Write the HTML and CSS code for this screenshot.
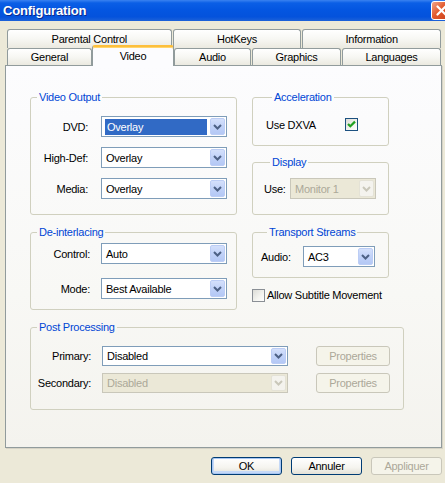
FILE: index.html
```html
<!DOCTYPE html>
<html>
<head>
<meta charset="utf-8">
<title>Configuration</title>
<link rel="stylesheet" href="styles.css">
</head>
<body>
<div class="window">
  <div class="titlebar">
    <span class="title">Configuration</span>
    <span class="close"><svg width="13" height="13" viewBox="0 0 13 13"><path d="M2.5 2.5 L10.5 10.5 M10.5 2.5 L2.5 10.5" stroke="#fff" stroke-width="2.2" stroke-linecap="round"/></svg></span>
  </div>
  <div class="content">
    <div class="tabs">
      <div class="tabrow back">
        <div class="tab t-parental">Parental Control</div>
        <div class="tab t-hotkeys">HotKeys</div>
        <div class="tab t-info">Information</div>
      </div>
      <div class="tabrow front">
        <div class="tab t-general">General</div>
        <div class="tab selected t-video">Video</div>
        <div class="tab t-audio">Audio</div>
        <div class="tab t-graphics">Graphics</div>
        <div class="tab t-lang">Languages</div>
      </div>
    </div>
    <div class="panel">
      <div class="columns">
        <div class="col col-left">
          <fieldset class="group g-vo">
            <legend>Video Output</legend>
            <div class="row">
              <span class="lbl lbl-vo">DVD:</span>
              <div class="combo c-vo"><span class="val sel">Overlay</span><span class="btn"><svg width="9" height="6" viewBox="0 0 9 6"><path d="M1 1 L4.5 4.5 L8 1" fill="none" stroke="#4d6185" stroke-width="2"/></svg></span></div>
            </div>
            <div class="row">
              <span class="lbl lbl-vo">High-Def:</span>
              <div class="combo c-vo"><span class="val">Overlay</span><span class="btn"><svg width="9" height="6" viewBox="0 0 9 6"><path d="M1 1 L4.5 4.5 L8 1" fill="none" stroke="#4d6185" stroke-width="2"/></svg></span></div>
            </div>
            <div class="row">
              <span class="lbl lbl-vo">Media:</span>
              <div class="combo c-vo"><span class="val">Overlay</span><span class="btn"><svg width="9" height="6" viewBox="0 0 9 6"><path d="M1 1 L4.5 4.5 L8 1" fill="none" stroke="#4d6185" stroke-width="2"/></svg></span></div>
            </div>
          </fieldset>
          <fieldset class="group g-di">
            <legend>De-interlacing</legend>
            <div class="row">
              <span class="lbl lbl-di">Control:</span>
              <div class="combo c-vo"><span class="val">Auto</span><span class="btn"><svg width="9" height="6" viewBox="0 0 9 6"><path d="M1 1 L4.5 4.5 L8 1" fill="none" stroke="#4d6185" stroke-width="2"/></svg></span></div>
            </div>
            <div class="row">
              <span class="lbl lbl-di">Mode:</span>
              <div class="combo c-vo"><span class="val">Best Available</span><span class="btn"><svg width="9" height="6" viewBox="0 0 9 6"><path d="M1 1 L4.5 4.5 L8 1" fill="none" stroke="#4d6185" stroke-width="2"/></svg></span></div>
            </div>
          </fieldset>
        </div>
        <div class="col col-right">
          <fieldset class="group g-acc">
            <legend>Acceleration</legend>
            <div class="row">
              <span class="lbl-acc">Use DXVA</span>
              <span class="check checked"><svg width="13" height="13" viewBox="0 0 13 13"><path d="M3 6 L5.3 8.3 L10 3.6" fill="none" stroke="#21a121" stroke-width="2.2"/></svg></span>
            </div>
          </fieldset>
          <fieldset class="group g-disp">
            <legend>Display</legend>
            <div class="row">
              <span class="lbl lbl-disp">Use:</span>
              <div class="combo disabled c-disp"><span class="val">Monitor 1</span><span class="btn"><svg width="9" height="6" viewBox="0 0 9 6"><path d="M1 1 L4.5 4.5 L8 1" fill="none" stroke="#c9c7ba" stroke-width="2"/></svg></span></div>
            </div>
          </fieldset>
          <fieldset class="group g-ts">
            <legend>Transport Streams</legend>
            <div class="row">
              <span class="lbl lbl-ts">Audio:</span>
              <div class="combo c-ts"><span class="val">AC3</span><span class="btn"><svg width="9" height="6" viewBox="0 0 9 6"><path d="M1 1 L4.5 4.5 L8 1" fill="none" stroke="#4d6185" stroke-width="2"/></svg></span></div>
            </div>
          </fieldset>
          <div class="checkrow">
            <span class="check"></span>
            <span>Allow Subtitle Movement</span>
          </div>
        </div>
      </div>
      <fieldset class="group g-pp">
        <legend>Post Processing</legend>
        <div class="row">
          <span class="lbl lbl-pp">Primary:</span>
          <div class="combo c-pp"><span class="val">Disabled</span><span class="btn"><svg width="9" height="6" viewBox="0 0 9 6"><path d="M1 1 L4.5 4.5 L8 1" fill="none" stroke="#4d6185" stroke-width="2"/></svg></span></div>
          <span class="button disabled b-prop">Properties</span>
        </div>
        <div class="row">
          <span class="lbl lbl-pp">Secondary:</span>
          <div class="combo disabled c-pp"><span class="val">Disabled</span><span class="btn"><svg width="9" height="6" viewBox="0 0 9 6"><path d="M1 1 L4.5 4.5 L8 1" fill="none" stroke="#c9c7ba" stroke-width="2"/></svg></span></div>
          <span class="button disabled b-prop">Properties</span>
        </div>
      </fieldset>
    </div>
    <div class="buttons">
      <span class="button default">OK</span>
      <span class="button">Annuler</span>
      <span class="button disabled">Appliquer</span>
    </div>
  </div>
</div>
</body>
</html>
```

FILE: styles.css
```css
html, body {
  margin: 0;
  padding: 0;
  background: #ece9d8;
}

.window {
  width: 445px;
  height: 483px;
  overflow: hidden;
  background: #ece9d8;
  font-family: "Liberation Sans", Arial, sans-serif;
  font-size: 11px;
  letter-spacing: -0.25px;
  color: #000;
}

/* Title bar */
.titlebar {
  height: 21px;
  display: flex;
  align-items: center;
  justify-content: space-between;
  padding-left: 3px;
  background: linear-gradient(to bottom, #3a82f0 0%, #0b5fe6 14%, #0456e1 45%, #0452dc 80%, #1d62d8 100%);
}

.title {
  font-family: "Liberation Sans", Arial, sans-serif;
  font-weight: bold;
  font-size: 13px;
  letter-spacing: -0.15px;
  color: #fff;
  text-shadow: 1px 1px 0 #0c2a8e;
}

.close {
  width: 19px;
  height: 17px;
  margin-right: -7px;
  border: 1px solid #fff;
  border-radius: 3px;
  background: linear-gradient(135deg, #f0a58a 0%, #e2582c 45%, #c8401a 100%);
  display: flex;
  align-items: center;
  justify-content: center;
}

/* Content */
.content {
  padding: 8px 3px 0 5px;
}

.tabs {
  margin-left: 2px;
}

.tabrow {
  display: flex;
}

.back {
  height: 19px;
}

.front {
  height: 17px;
}

.tab {
  box-sizing: border-box;
  border: 1px solid #919b9c;
  border-bottom: none;
  border-radius: 3px 3px 0 0;
  background: linear-gradient(to bottom, #ffffff 0%, #f7f7f3 50%, #ebe9e0 100%);
  display: flex;
  align-items: center;
  justify-content: center;
  margin-right: 1px;
}

.back .tab {
  height: 19px;
}

.front .tab {
  height: 17px;
}

.t-parental { width: 165px; }
.t-hotkeys { width: 129px; }
.t-info { width: 139px; }

.t-general { width: 85px; margin-right: 0; }
.t-video { width: 82px; }
.t-audio { width: 77px; }
.t-graphics { width: 89px; }
.t-lang { width: 99px; margin-right: 0; }

.front .tab.selected {
  position: relative;
  z-index: 2;
  height: 21px;
  margin-top: -3px;
  margin-right: 0;
  border-top: 2px solid #fdbf3c;
  box-shadow: inset 0 1px 0 #ffd56e;
  background: #fcfcfe;
  padding-bottom: 2px;
}

/* Panel */
.panel {
  position: relative;
  z-index: 1;
  box-sizing: border-box;
  width: 437px;
  height: 383px;
  border: 1px solid #919b9c;
  box-shadow: 1px 1px 0 #d6d3c6;
  background: linear-gradient(to bottom, #fcfcfe 0%, #f8f8f5 60%, #f4f3ee 100%);
  padding: 24px 0 0 24px;
}

.columns {
  display: flex;
  gap: 15px;
  align-items: flex-start;
}

.col {
  display: flex;
  flex-direction: column;
}

.col-left {
  width: 207px;
  gap: 10px;
}

.col-right {
  width: 137px;
}

.group {
  box-sizing: border-box;
  margin: 0;
  padding: 0;
  min-width: 0;
  border: 1px solid #d0d0bf;
  border-radius: 3px;
}

.group legend {
  color: #0046d5;
  line-height: 14px;
  padding: 0 2px;
  margin-left: 6px;
}

.row {
  display: flex;
  align-items: center;
}

.lbl {
  text-align: right;
  flex: none;
}

.g-vo {
  height: 125px;
  padding-top: 12px;
  display: flex;
  flex-direction: column;
  gap: 10px;
}

.lbl-vo { width: 57px; margin-right: 13px; }

.g-di {
  height: 85px;
  padding-top: 4px;
  display: flex;
  flex-direction: column;
  gap: 14px;
}

.lbl-di { width: 59px; margin-right: 11px; }

.g-acc {
  height: 56px;
  padding: 14px 0 0 13px;
}

.lbl-acc {
  width: 79px;
}

.g-disp {
  height: 60px;
  margin-top: 9px;
  padding: 9px 0 0 11px;
}

.lbl-disp { width: 26px; text-align: left; }

.g-ts {
  height: 53px;
  margin-top: 10px;
  padding: 7px 0 0 8px;
}

.lbl-ts { width: 42px; text-align: left; }

.checkrow {
  margin-top: 10px;
  display: flex;
  align-items: center;
  gap: 2px;
  height: 14px;
}

.g-pp {
  width: 374px;
  height: 90px;
  margin-top: 10px;
  padding-top: 12px;
  display: flex;
  flex-direction: column;
  gap: 7px;
}

.lbl-pp { width: 60px; margin-right: 11px; }

/* Combo boxes */
.combo {
  box-sizing: border-box;
  display: flex;
  align-items: center;
  height: 21px;
  border: 1px solid #7f9db9;
  background: #fff;
  flex: none;
}

.combo .val {
  flex: 1;
  padding-left: 4px;
  white-space: nowrap;
  overflow: hidden;
}

.combo .val.sel {
  margin: 0 3px 0 3px;
  height: 16px;
  line-height: 16px;
  padding-left: 2px;
  background: #316ac5;
  color: #fff;
}

.combo .btn {
  box-sizing: border-box;
  width: 15px;
  height: 17px;
  margin-right: 1px;
  border: 1px solid #bccdf5;
  border-radius: 2px;
  background: linear-gradient(to bottom, #d4e0fb 0%, #c1d2f8 50%, #b4c8f5 100%);
  display: flex;
  align-items: center;
  justify-content: center;
}

.combo.disabled {
  border-color: #c9c7ba;
  background: #ebe8d7;
  color: #aca899;
}

.combo.disabled .btn {
  border-color: #e4e2d6;
  background: #f4f3ee;
}

.c-vo { width: 126px; }
.c-disp { width: 86px; height: 21px; }
.c-ts { width: 72px; }
.c-pp { width: 186px; height: 20px; }
.c-pp .btn { height: 16px; }

/* Checkboxes */
.check {
  box-sizing: border-box;
  width: 13px;
  height: 13px;
  border: 1px solid #1c5180;
  background: linear-gradient(135deg, #dcdcd7 0%, #f4f4f0 60%, #ffffff 100%);
  display: flex;
  align-items: center;
  justify-content: center;
  flex: none;
}

.check svg {
  margin: -1px;
}

.checkrow .check {
  border-color: #8a8f95;
}

/* Buttons */
.button {
  box-sizing: border-box;
  display: flex;
  align-items: center;
  justify-content: center;
  border: 1px solid #003c74;
  border-radius: 3px;
  background: linear-gradient(to bottom, #ffffff 0%, #f5f4ef 60%, #e3e1d7 100%);
  flex: none;
}

.button.disabled {
  border-color: #c9c7ba;
  background: #f5f4ea;
  color: #aca899;
}

.button.default {
  box-shadow: inset 0 0 0 1px #a8c6f2, inset 0 -1px 0 2px #c5d9f7;
}

.b-prop {
  width: 74px;
  height: 20px;
  margin-left: 28px;
}

.buttons {
  display: flex;
  justify-content: flex-end;
  gap: 9px;
  margin-top: 9px;
}

.buttons .button {
  width: 71px;
  height: 18px;
}
```
